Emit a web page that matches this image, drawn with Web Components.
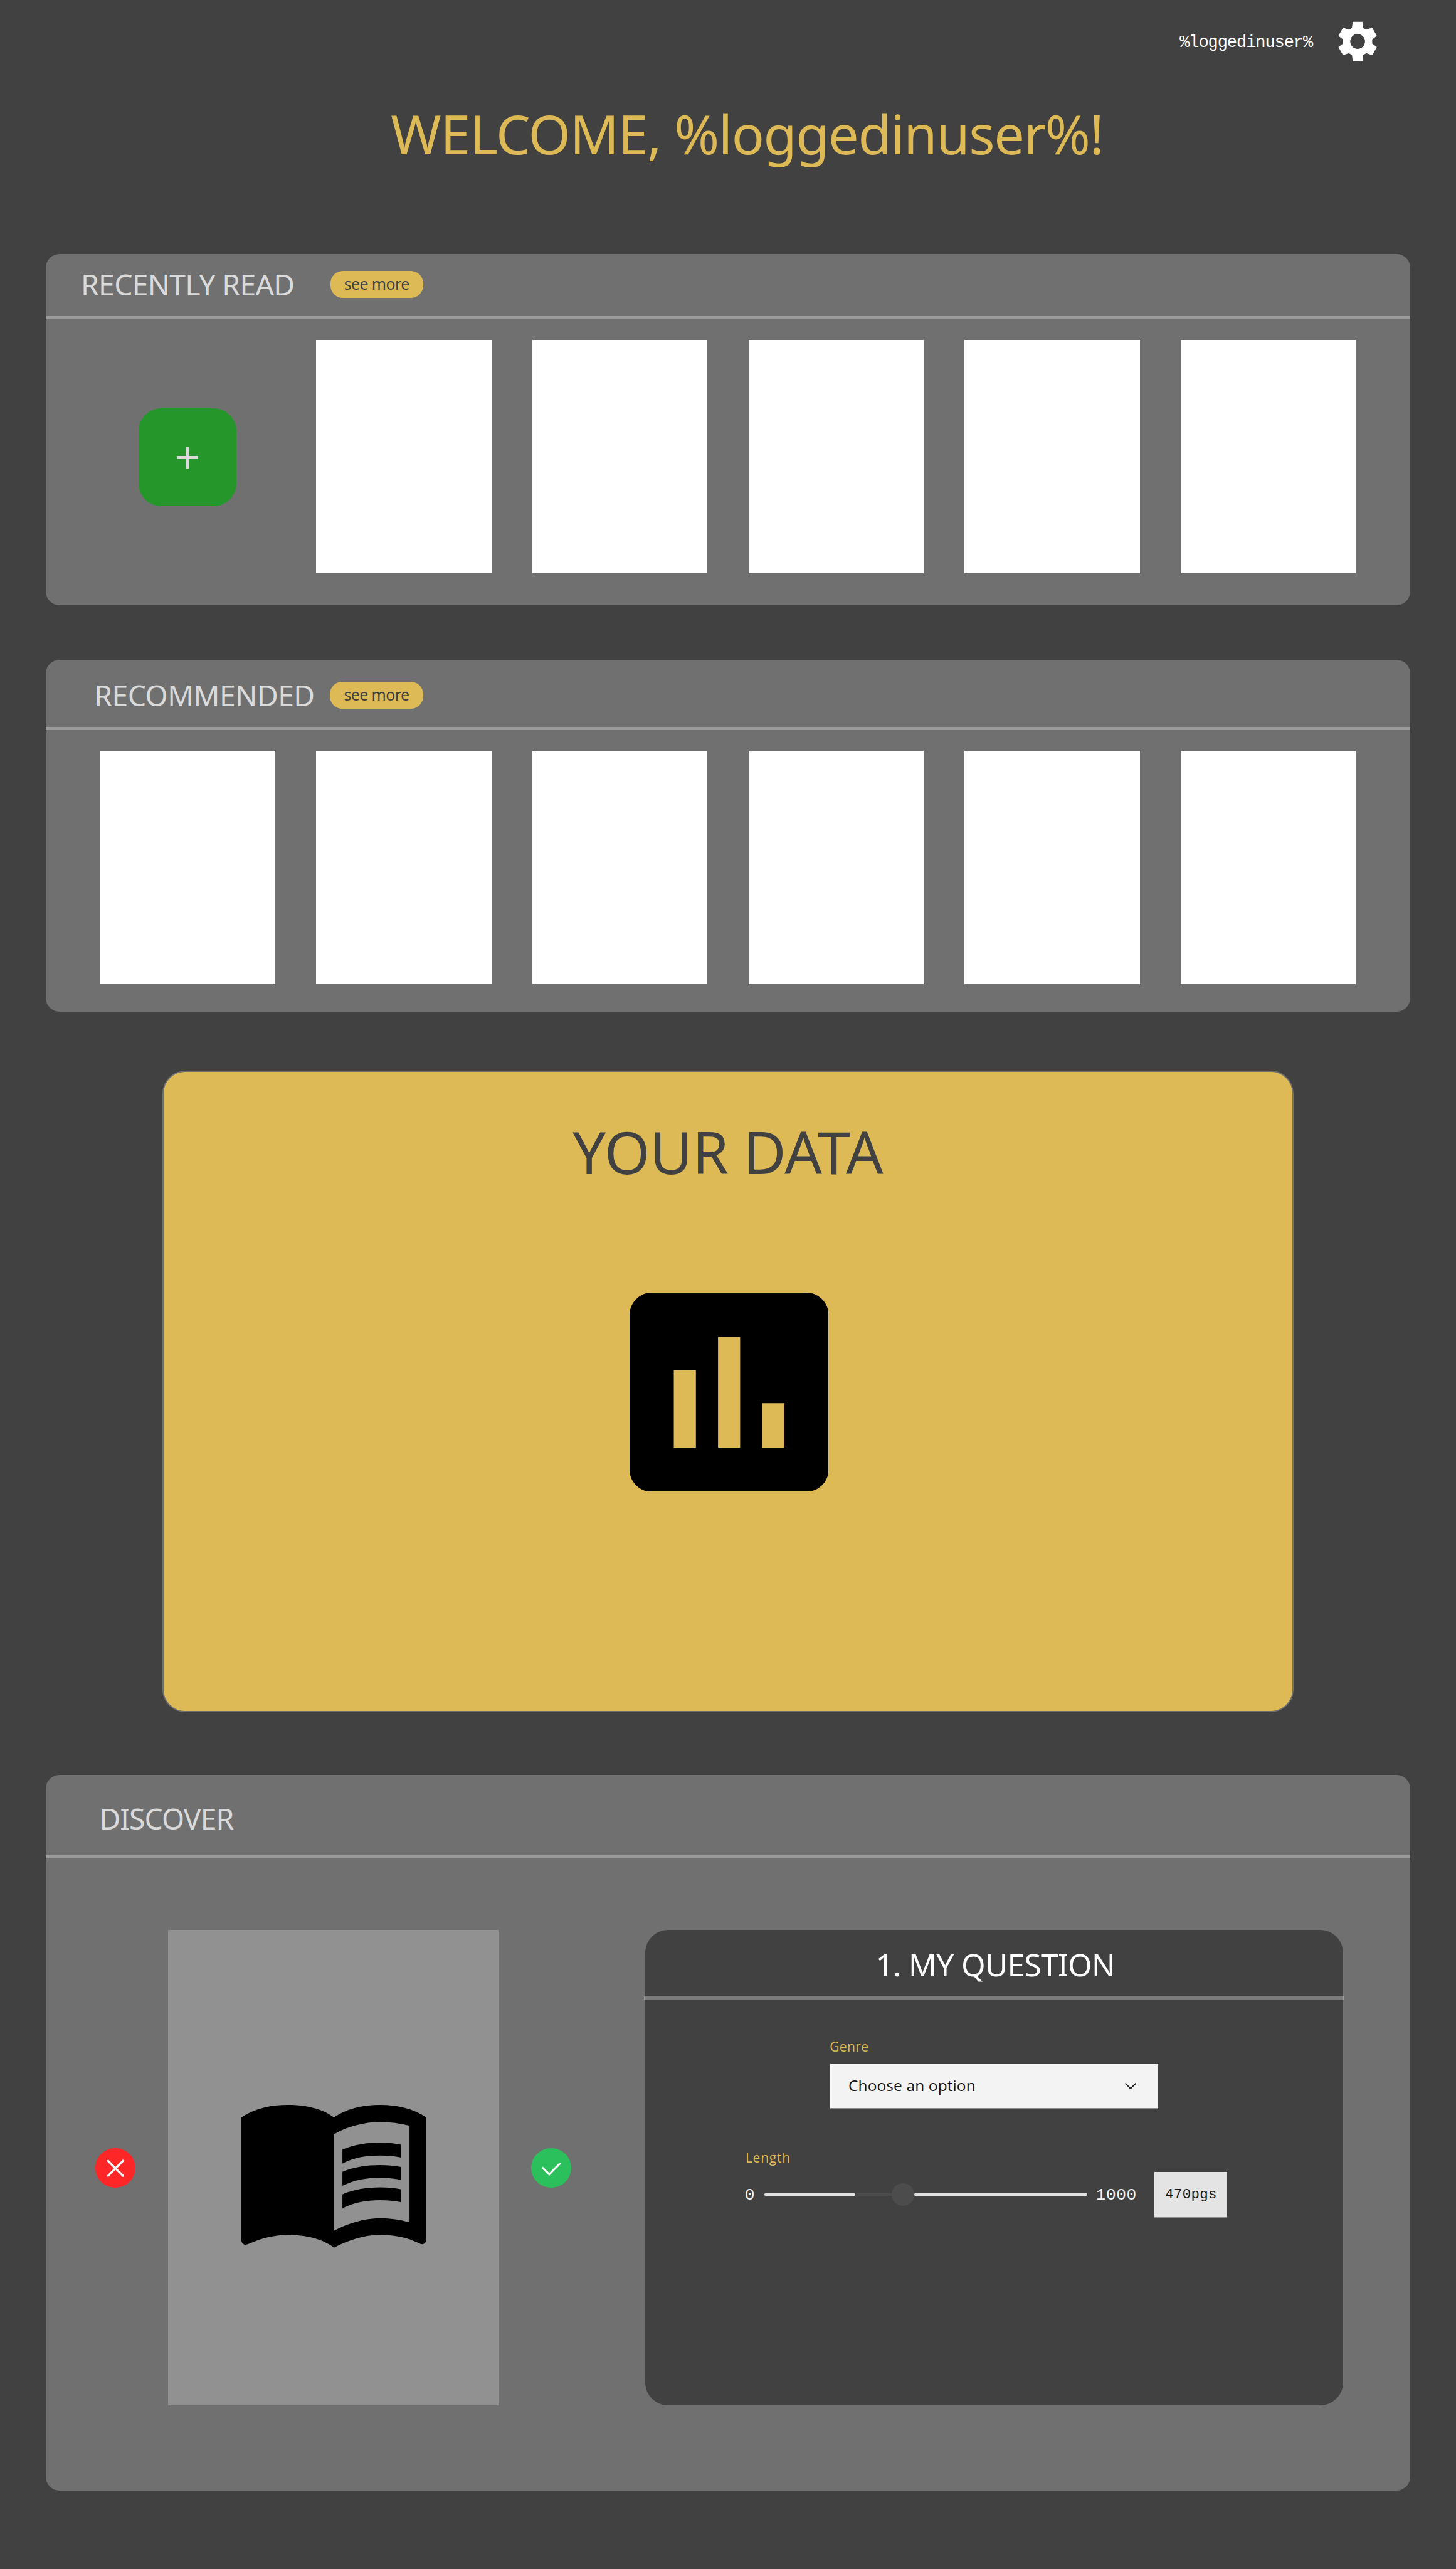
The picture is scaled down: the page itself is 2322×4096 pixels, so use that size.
<!DOCTYPE html>
<html lang="en">
<head>
<meta charset="utf-8">
<title>Book dashboard</title>
<style>
  /* 1rem is ten design pixels */
  html { font-size: 9.0703125px; background: #414141; }
  body { margin: 0; font-family: "Noto Sans", sans-serif; color: #dadada; }
</style>
</head>
<body>
<book-dashboard></book-dashboard>
<script>
const UNIT = 0.90703125;
const SANS = '"Noto Sans", sans-serif';
const FORM = '"Open Sans", "Noto Sans", sans-serif';
const MONO = '"Liberation Mono", monospace';
const ctx = document.createElement('canvas').getContext('2d');

function define(name, html, setup) {
  customElements.define(name, class extends HTMLElement {
    constructor() {
      super();
      this.attachShadow({ mode: 'open' }).innerHTML = html;
    }
    connectedCallback() { if (setup) setup(this, this.shadowRoot); }
  });
}

/* A label whose box is exactly its cap height and its inked width. */
define('cap-text', `
  <style>
    :host { display: flow-root; flex: none; }
    span { display: block; width: max-content; white-space: pre; }
  </style><span></span>`, (host, root) => {
  const span = root.querySelector('span');
  const text = host.getAttribute('text');
  const ref = host.getAttribute('ref') || 'H';
  const family = { form: FORM, mono: MONO }[host.getAttribute('face')] || SANS;
  const cap = +host.getAttribute('cap') * UNIT;
  const probe = 1000;
  ctx.font = `${probe}px ${family}`;
  const r = ctx.measureText(ref), m = ctx.measureText(text);
  const drop = ref !== 'H' ? r.actualBoundingBoxDescent : 0;
  const k = cap / (r.actualBoundingBoxAscent + drop);
  const ink = (m.actualBoundingBoxLeft + m.actualBoundingBoxRight) * k;
  const want = host.hasAttribute('w') ? +host.getAttribute('w') * UNIT : ink;
  const spacing = text.length > 1 ? (want - ink) / (text.length - 1) : 0;
  span.textContent = text;
  span.style.fontFamily = family;
  span.style.fontSize = k * probe + 'px';
  span.style.lineHeight = cap + 'px';
  span.style.letterSpacing = spacing + 'px';
  const baseline = (cap + (m.fontBoundingBoxAscent - m.fontBoundingBoxDescent) * k) / 2;
  span.style.marginTop = cap - drop * k - baseline + 'px';
  span.style.marginLeft = m.actualBoundingBoxLeft * k + 'px';
  host.style.width = want + 'px';
  host.style.height = cap + 'px';
});

define('gear-icon', `
  <style>:host { display: block; width: 8.4rem; height: 8.4rem; } svg { display: block; width: 100%; height: 100%; }</style>
  <svg viewBox="-126 -126 252 252"><path fill="#fff" fill-rule="evenodd" stroke="#fff" stroke-width="4" stroke-linejoin="round"
    d="M-24-102H24L28-70L46-60L76-70L99-30L75-12V12L99 30L76 70L46 60L28 70L24 102H-24L-28 70L-46 60L-76 70L-99 30L-75 12V-12L-99-30L-76-70L-46-60L-28-70ZM41 0A41 41 0 1 0-41 0A41 41 0 1 0 41 0Z"/></svg>`);

define('chart-icon', `
  <style>:host { display: block; width: 35rem; height: 35rem; } svg { display: block; width: 100%; height: 100%; }</style>
  <svg viewBox="3 3 18 18"><path d="M19 3H5c-1.1 0-2 .9-2 2v14c0 1.1.9 2 2 2h14c1.1 0 2-.9 2-2V5c0-1.1-.9-2-2-2zM9 17H7v-7h2v7zm4 0h-2V7h2v10zm4 0h-2v-4h2v4z"/></svg>`);

define('book-icon', `
  <style>:host { display: block; width: 32.5rem; height: 25.1rem; } svg { display: block; width: 100%; height: 100%; }</style>
  <svg viewBox="60 152 796 635" preserveAspectRatio="none">
    <path fill-rule="evenodd" d="M60 208C115 168 185 152 262 152S410 170 459 208C508 170 580 152 657 152S805 170 856 208V750C856 764 846 772 838 772C832 772 829 769 824 767C770 740 715 730 657 730C590 730 515 755 459 787C410 748 335 730 262 730C205 730 145 745 92 770C86 773 82 774 76 774C68 772 60 764 60 755ZM458 283C515 248 590 228 657 228C700 228 745 234 784 245V675C745 662 700 656 657 656C590 656 515 680 458 712Z"/>
    <path d="M495 351C545 328 600 320 657 320C690 320 720 323 748 329V386C720 380 690 377 657 377C595 377 545 386 495 413Z"/>
    <path d="M495 450C545 428 600 420 657 420C690 420 720 423 748 428V486C720 480 690 476 657 476C595 476 545 486 495 512Z"/>
    <path d="M495 550C545 528 600 519 657 519C690 519 720 522 748 528V585C720 579 690 576 657 576C595 576 545 586 495 612Z"/>
  </svg>`);

define('round-button', `
  <style>
    :host { display: block; flex: none; width: 7rem; height: 7rem; border-radius: 50%; background: #ff2628; }
    :host([kind=accept]) { background: #2cc05c; }
    svg { display: block; width: 100%; height: 100%; fill: none; stroke: #fff; stroke-width: 3.6; }
  </style><svg viewBox="0 0 70 70"><path/></svg>`, (host, root) => {
  root.querySelector('path').setAttribute('d',
    host.getAttribute('kind') === 'accept' ? 'M19.3 33.8L31.8 46L51.4 26.4' : 'M21.2 21.2L49.8 49.8M49.8 21.2L21.2 49.8');
});

define('more-button', `
  <style>
    :host { display: flex; flex: none; align-items: center; justify-content: center; width: 16.4rem; height: 4.8rem;
      border-radius: 2.2rem; background: #ddba55; color: #414141; }
  </style><cap-text cap="19.7" w="112.6" text="see more"></cap-text>`);

define('add-button', `
  <style>
    :host { display: flex; align-items: center; justify-content: center; width: 17.2rem; height: 17.2rem;
      border-radius: 4rem; background: #24962a; color: #dadada; margin-top: .2rem; }
  </style><cap-text cap="39" ref="+" text="+"></cap-text>`);

define('book-cover', `
  <style>
    :host { display: flex; flex: none; align-items: center; justify-content: center; width: 30.8rem; height: 41rem; background: #fff; }
    :host([empty]) { background: none; }
  </style><slot></slot>`);

define('book-shelf', `
  <style>:host { display: flex; gap: 7.2rem; padding: 3.7rem 9.6rem 0; }</style><slot></slot>`);

define('dash-panel', `
  <style>
    :host { display: flex; flex-direction: column; box-sizing: border-box; border-radius: 2.4rem; background: #707070; overflow: hidden; }
    header { display: flex; flex: none; align-items: flex-start; box-sizing: border-box; border-bottom: .6rem solid #9b9b9b;
      height: var(--head); padding: var(--top) 0 0 var(--left); gap: var(--gap, 0); }
    ::slotted(more-button) { margin-top: -.74rem; }
  </style>
  <header><slot name="head"></slot></header><slot></slot>`);

define('data-card', `
  <style>
    :host { display: flex; flex-direction: column; align-items: center; box-sizing: border-box; border: 2px solid #707070;
      border-radius: 4rem; background: #ddba55; color: #414141; padding-top: 10.6rem; gap: 20.77rem; }
    chart-icon { margin-left: .28rem; }
  </style>
  <cap-text cap="74" w="546.5" text="YOUR DATA"></cap-text><chart-icon></chart-icon>`);

define('option-select', `
  <style>
    :host { display: flex; align-items: center; justify-content: space-between; box-sizing: border-box; width: 57.6rem; height: 8rem;
      padding: 0 3.7rem 0 3.3rem; background: #f3f3f3; border-bottom: 2px solid #8d8d8d; color: #161616; }
    svg { width: 2.2rem; height: 1.3rem; fill: none; stroke: #161616; stroke-width: 2; margin-bottom: .1rem; }
  </style>
  <cap-text face="form" cap="19.4" w="220.6" text="Choose an option"></cap-text>
  <svg viewBox="0 0 22 13"><path d="M1.7 1.7L11 11L20.3 1.7"/></svg>`);

define('length-slider', `
  <style>
    :host { display: flex; align-items: center; color: #f4f4f4; height: 8rem; }
    .track { display: flex; align-items: center; width: 56.8rem; margin: 0 1.7rem 0 1.84rem; }
    i { display: block; height: .4rem; border-radius: .2rem; background: #e0e0e0; }
    i.a { width: 16rem; } i.b { width: 6.4rem; background: #4c4c4c; } i.c { flex: 1; }
    b { width: 4rem; height: 4rem; border-radius: 50%; background: #4c4c4c; }
    .value { display: flex; align-items: center; justify-content: center; box-sizing: border-box; width: 12.8rem; height: 8rem;
      margin-left: 3.34rem; background: #e4e4e4; border-bottom: 2px solid #8d8d8d; color: #161616; }
  </style>
  <cap-text face="mono" cap="19.4" text="0"></cap-text>
  <div class="track"><i class="a"></i><i class="b"></i><b></b><i class="c"></i></div>
  <cap-text face="mono" cap="19.4" w="67.6" text="1000"></cap-text>
  <div class="value"><cap-text face="mono" cap="16.6" w="88" text="470pgs"></cap-text></div>`);

define('question-card', `
  <style>
    :host { display: flex; flex: none; flex-direction: column; width: 122.8rem; height: 83.6rem; border-radius: 4rem; background: #414141; color: #fff; }
    header { display: flex; justify-content: center; box-sizing: border-box; height: 12.3rem; padding: 4.25rem 0 0 .44rem; margin: 0 -.2rem;
      border-bottom: .6rem solid rgba(246, 246, 246, .32); }
    .label { color: #ddba55; }
    .genre { display: flex; flex-direction: column; gap: 2.2rem; padding: 7.43rem 0 0 32.6rem; }
    .length { display: flex; flex-direction: column; gap: 1.63rem; padding: 7.7rem 0 0 17.7rem; }
    .length .label { margin-left: .2rem; }
  </style>
  <header><cap-text cap="39.2" w="412.4" text="1. MY QUESTION"></cap-text></header>
  <div class="genre"><cap-text class="label" face="form" cap="16.7" w="66" text="Genre"></cap-text><option-select></option-select></div>
  <div class="length"><cap-text class="label" face="form" cap="16.7" w="75" text="Length"></cap-text><length-slider></length-slider></div>`);

define('discover-row', `
  <style>
    :host { display: flex; align-items: center; gap: 5.8rem; padding: 12.5rem 0 0 8.8rem; }
    .cover { display: flex; flex: none; align-items: center; justify-content: center; box-sizing: border-box; width: 58rem; height: 83.6rem;
      background: #919191; padding: 3.1rem 0 0 .2rem; }
    round-button { margin-top: .2rem; }
    question-card { margin-left: 7.2rem; }
  </style>
  <round-button kind="reject"></round-button>
  <div class="cover"><book-icon></book-icon></div>
  <round-button kind="accept"></round-button>
  <question-card></question-card>`);

define('book-dashboard', `
  <style>
    :host { display: flex; flex-direction: column; box-sizing: border-box; width: 2322px; height: 4096px; background: #414141; overflow: hidden; }
    nav { display: flex; flex: none; align-items: center; justify-content: flex-end; gap: 3.6rem; height: 14.6rem; padding-right: 13.1rem; color: #fff; }
    .welcome { flex: none; box-sizing: border-box; height: 30rem; padding: 5.75rem 0 0 68.7rem; color: #ddba55; }
    dash-panel { flex: none; margin: 0 8rem; height: 61.8rem; color: #dadada; }
    .recent { --head: 11.5rem; --top: 3.74rem; --left: 6.7rem; --gap: 6.5rem; }
    .recommended { margin-top: 9.6rem; --head: 12.3rem; --top: 4.54rem; --left: 9.05rem; --gap: 2.95rem; }
    data-card { flex: none; width: 198.8rem; height: 112.8rem; margin: 10.4rem auto 11rem; }
    .discover { --head: 14.7rem; --top: 5.95rem; --left: 9.95rem; height: 125.8rem; }
  </style>
  <nav><cap-text face="mono" cap="20" w="235" text="%loggedinuser%"></cap-text><gear-icon></gear-icon></nav>
  <div class="welcome"><cap-text cap="68.5" w="1248" text="WELCOME, %loggedinuser%!"></cap-text></div>
  <dash-panel class="recent">
    <cap-text slot="head" cap="36.7" w="368.5" text="RECENTLY READ"></cap-text><more-button slot="head"></more-button>
    <book-shelf><book-cover empty><add-button></add-button></book-cover><book-cover></book-cover><book-cover></book-cover><book-cover></book-cover><book-cover></book-cover><book-cover></book-cover></book-shelf>
  </dash-panel>
  <dash-panel class="recommended">
    <cap-text slot="head" cap="36.7" w="380.3" text="RECOMMENDED"></cap-text><more-button slot="head"></more-button>
    <book-shelf><book-cover></book-cover><book-cover></book-cover><book-cover></book-cover><book-cover></book-cover><book-cover></book-cover><book-cover></book-cover></book-shelf>
  </dash-panel>
  <data-card></data-card>
  <dash-panel class="discover">
    <cap-text slot="head" cap="36.7" w="231.5" text="DISCOVER"></cap-text>
    <discover-row></discover-row>
  </dash-panel>`);
</script>
</body>
</html>
